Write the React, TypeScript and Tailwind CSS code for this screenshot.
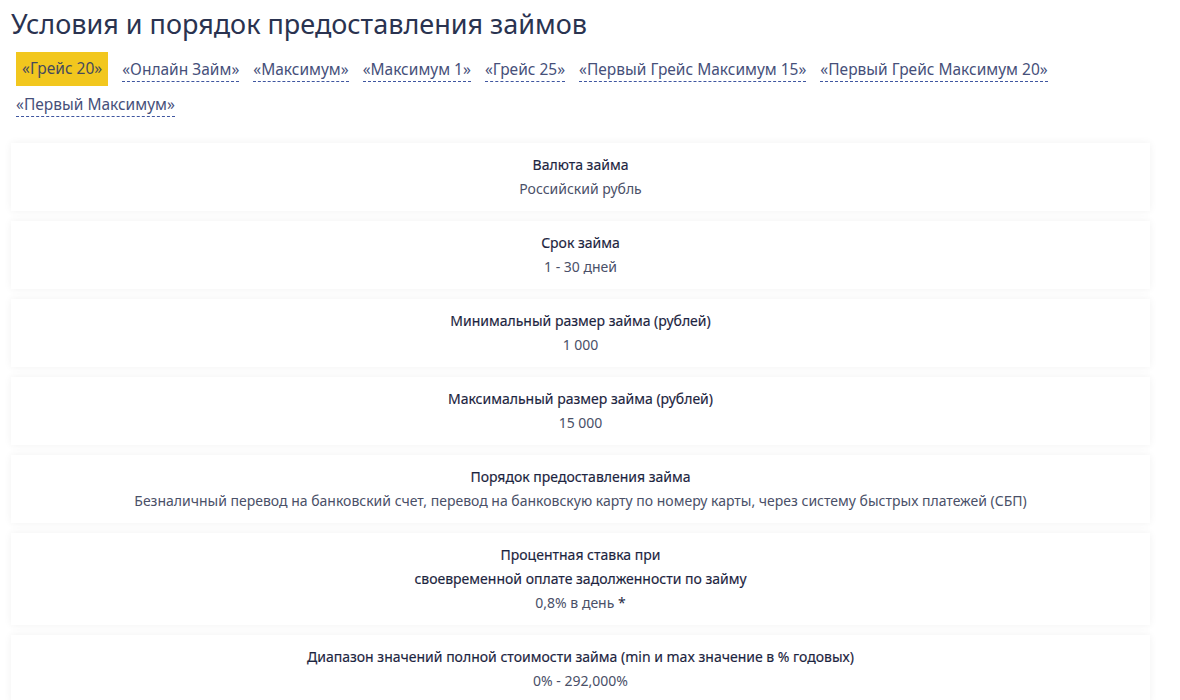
import React from "react";

const tabs = [
  "«Грейс 20»",
  "«Онлайн Займ»",
  "«Максимум»",
  "«Максимум 1»",
  "«Грейс 25»",
  "«Первый Грейс Максимум 15»",
  "«Первый Грейс Максимум 20»",
  "«Первый Максимум»",
];

const rows: { title: string[]; value: React.ReactNode }[] = [
  { title: ["Валюта займа"], value: "Российский рубль" },
  { title: ["Срок займа"], value: "1 - 30 дней" },
  { title: ["Минимальный размер займа (рублей)"], value: "1 000" },
  { title: ["Максимальный размер займа (рублей)"], value: "15 000" },
  {
    title: ["Порядок предоставления займа"],
    value:
      "Безналичный перевод на банковский счет, перевод на банковскую карту по номеру карты, через систему быстрых платежей (СБП)",
  },
  {
    title: ["Процентная ставка при", "своевременной оплате задолженности по займу"],
    value: (
      <>
        0,8% в день <span className="text-[#1f2a44]">*</span>
      </>
    ),
  },
  {
    title: ["Диапазон значений полной стоимости займа (min и max значение в % годовых)"],
    value: "0% - 292,000%",
  },
];

export default function App() {
  return (
    <div
      className="bg-white min-h-[700px] w-[1180px] overflow-hidden text-[#2a3350]"
      style={{ fontFamily: '"Noto Sans", "Open Sans", sans-serif' }}
    >
      <div className="pl-[11px] pr-[30px]">
        <h1 className="text-[27px] leading-[36px] pt-[6px] text-[#2a3350] font-normal">
          Условия и порядок предоставления займов
        </h1>
        <div className="flex flex-wrap mt-[10px] gap-y-[1px] -ml-[11px] pl-[16px]">
          {tabs.map((t, i) =>
            i === 0 ? (
              <div
                key={t}
                className="h-[34px] px-[6px] mr-[14px] flex items-center bg-[#f2c71e] text-[15.5px] text-[#464a5c]"
              >
                {t}
              </div>
            ) : (
              <div key={t} className="h-[34px] mr-[14px] flex items-center">
                <span className="text-[15.5px] leading-[20px] text-[#46507a] border-b border-dashed border-[#3f56a0] pb-[2px] mt-[2px]">
                  {t}
                </span>
              </div>
            )
          )}
        </div>
        <div className="mt-[22px] flex flex-col gap-[10px] w-[1139px]">
          {rows.map((r, i) => (
            <div
              key={i}
              className="bg-white shadow-[0_0_8px_rgba(0,0,0,0.06)] py-[10px] text-center text-[14px] leading-[24px]"
            >
              {r.title.map((l) => (
                <div key={l} className="font-normal text-[#1c2440] [-webkit-text-stroke:0.15px_#1c2440]">
                  {l}
                </div>
              ))}
              <div className="text-[#4a5068]">{r.value}</div>
            </div>
          ))}
        </div>
      </div>
    </div>
  );
}
